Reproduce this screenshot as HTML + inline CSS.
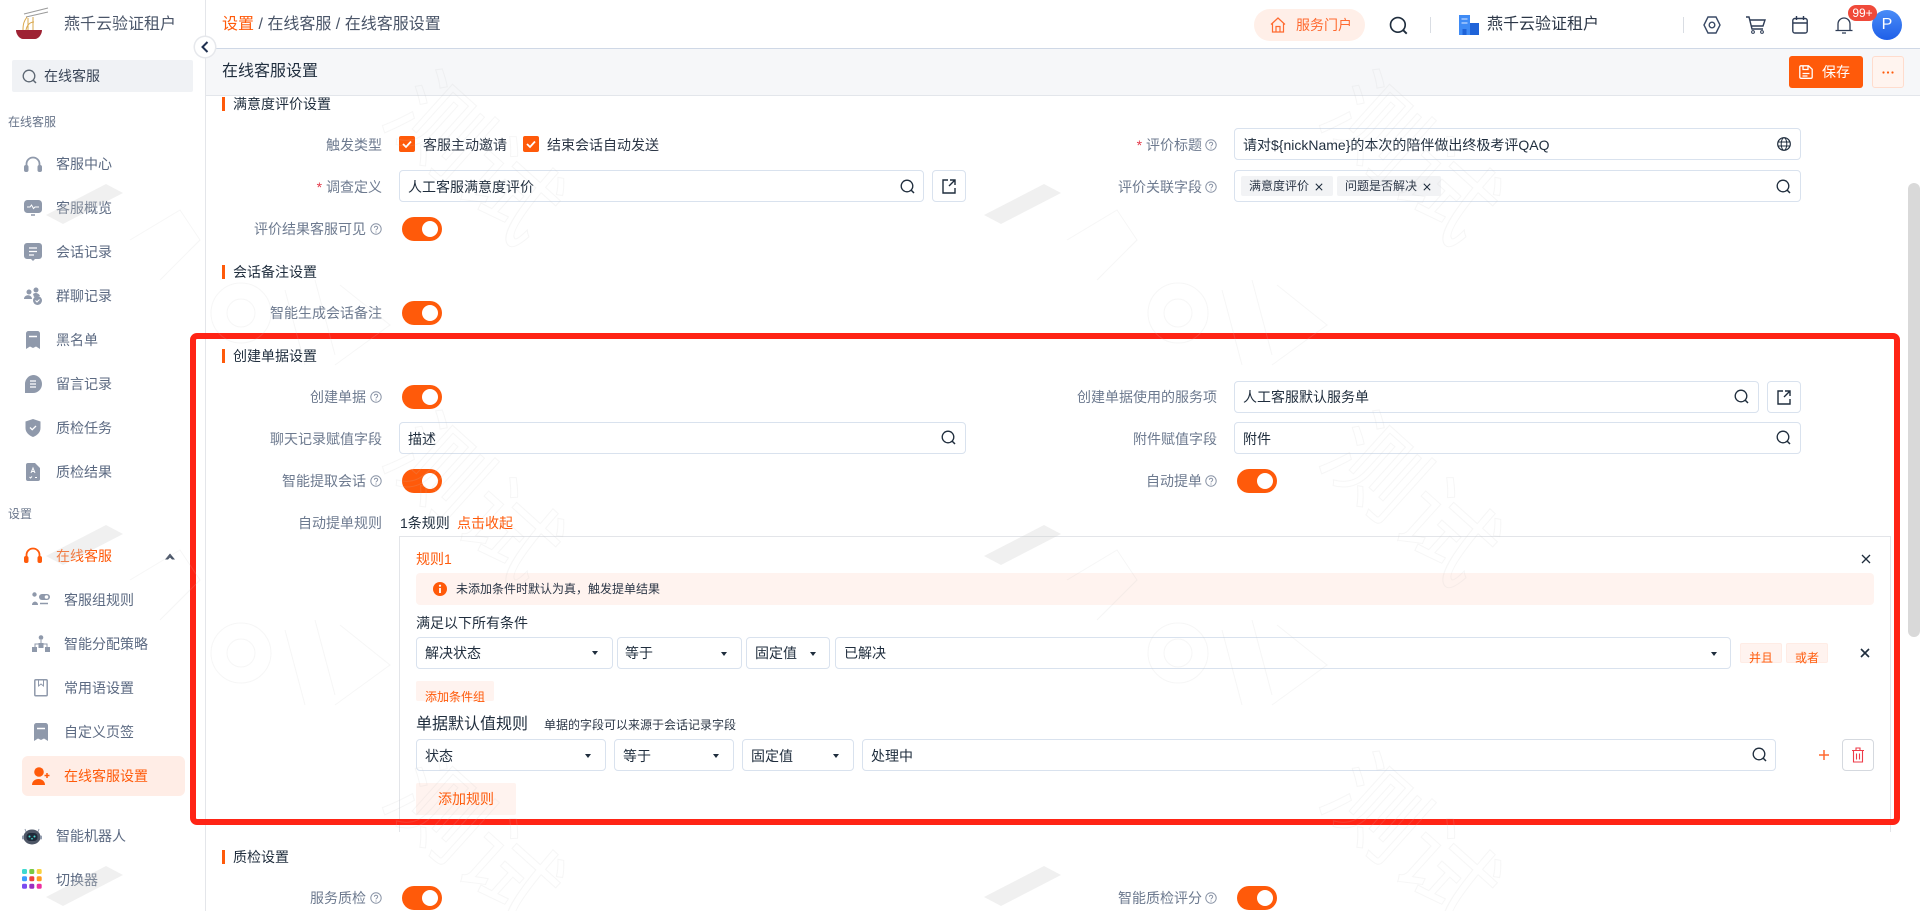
<!DOCTYPE html>
<html lang="zh"><head><meta charset="utf-8"><title>在线客服设置</title>
<style>
html,body{margin:0;padding:0;width:1920px;height:911px;overflow:hidden;background:#fff;font-family:"Liberation Sans","Noto Sans CJK SC",sans-serif;font-size:14px;color:#1f2d3d}
.t{position:absolute;white-space:nowrap;line-height:20px;height:20px}
.m{color:#5c6a82}.s{color:#69758a;font-size:12px}.sec{font-size:14px;color:#1f2d3d;left:233px}
.l{color:#6d7a8f}.o{color:#ff5a0a}
.b{position:absolute;border:1px solid #d9e2ee;border-radius:4px;background:#fff;box-sizing:border-box}
.bar{position:absolute;left:222px;width:3px;height:14px;background:#ff5a0a}
.tg{position:absolute;width:40px;height:24px;border-radius:12px;background:#ff5a0a}
.tg:after{content:"";position:absolute;left:20px;top:4px;width:16px;height:16px;border-radius:50%;background:#fff}
.tag{position:absolute;top:176px;height:20px;background:#f2f3f5;border-radius:2px}
.lt{position:absolute;background:#fff3ef;border-radius:2px}
.car{position:absolute;width:0;height:0;border-left:3.5px solid transparent;border-right:3.5px solid transparent;border-top:4px solid #1f2d3d}
.ck{position:absolute;top:136px;width:16px;height:16px;background:#ff5a0a;border-radius:2px}
svg{position:absolute;overflow:visible}
</style></head><body>
<svg width="0" height="0" style="position:absolute"><defs>
<g id="sr"><circle cx="7" cy="7" r="5.8" fill="none" stroke="#1f2d3d" stroke-width="1.3"/><path d="M11 11l3 3" stroke="#1f2d3d" stroke-width="1.5" fill="none"/></g>
<g id="hp"><circle cx="6" cy="6" r="5.2" fill="none" stroke="#8a94a6" stroke-width="1"/><path d="M4.4 4.8c0-2.1 3.3-2.1 3.3 0 0 1.3-1.7 1.3-1.7 2.6" fill="none" stroke="#8a94a6"/><circle cx="6" cy="9" r=".6" fill="#8a94a6"/></g>
<g id="op"><path d="M7 2H2v13h12v-5M9 2h5v5M14 2L8 8" fill="none" stroke="#1f2d3d" stroke-width="1.4"/></g>
<g id="x"><path d="M1 1l8 8M9 1L1 9" fill="none" stroke="#1f2d3d" stroke-width="1.3"/></g>
<path id="ckm" d="M4 8l3 3 5-5.5" fill="none" stroke="#fff" stroke-width="1.8"/>
</defs></svg>

<!-- sidebar -->
<div style="position:absolute;left:205px;top:0;width:1px;height:911px;background:#e4e6ea"></div>
<svg style="left:14px;top:6px" width="36" height="36" viewBox="0 0 36 36"><path d="M2 24h26c0 5-4 9-7 9H9c-3 0-7-4-7-9z" fill="#9e2233"/><path d="M10 8L34 2M12 11L34 6" stroke="#9a9a9a" stroke-width="1" fill="none"/><path d="M9 24c0-6 1-9 4-13M14 24V12M19 24V11M12 24c1-5 4-8 8-8" stroke="#d9a84e" stroke-width="1" fill="none"/></svg>
<div class="t" style="left:64px;top:15px;font-size:16px;color:#4a5568">燕千云验证租户</div>
<div style="position:absolute;left:12px;top:60px;width:181px;height:32px;background:#f0f2f5;border-radius:2px"></div>
<svg style="left:22px;top:69px" width="15" height="15"><use href="#sr" style="opacity:.7"/></svg>
<div class="t" style="left:44px;top:66px;color:#3a4557">在线客服</div>
<div class="t s" style="left:8px;top:112px">在线客服</div>
<div class="t m" style="left:56px;top:154px">客服中心</div>
<div class="t m" style="left:56px;top:198px">客服概览</div>
<div class="t m" style="left:56px;top:242px">会话记录</div>
<div class="t m" style="left:56px;top:286px">群聊记录</div>
<div class="t m" style="left:56px;top:330px">黑名单</div>
<div class="t m" style="left:56px;top:374px">留言记录</div>
<div class="t m" style="left:56px;top:418px">质检任务</div>
<div class="t m" style="left:56px;top:462px">质检结果</div>
<div class="t s" style="left:8px;top:504px">设置</div>
<div class="t o" style="left:56px;top:546px">在线客服</div>
<div class="t m" style="left:64px;top:590px">客服组规则</div>
<div class="t m" style="left:64px;top:634px">智能分配策略</div>
<div class="t m" style="left:64px;top:678px">常用语设置</div>
<div class="t m" style="left:64px;top:722px">自定义页签</div>
<div style="position:absolute;left:22px;top:756px;width:163px;height:40px;background:#ffede6;border-radius:6px"></div>
<div class="t o" style="left:64px;top:766px">在线客服设置</div>
<div class="t m" style="left:56px;top:826px">智能机器人</div>
<div class="t m" style="left:56px;top:870px">切换器</div>

<!-- sidebar icons -->
<svg style="left:24px;top:156px" width="18" height="18" viewBox="0 0 18 18"><path d="M2.5 11V8a6.5 6.5 0 0113 0v3" fill="none" stroke="#8f99ab" stroke-width="1.8"/><rect x="0" y="9" width="4.5" height="7" rx="2" fill="#8f99ab"/><rect x="13.5" y="9" width="4.5" height="7" rx="2" fill="#8f99ab"/></svg>
<svg style="left:24px;top:199px" width="18" height="18" viewBox="0 0 18 18"><rect x="0" y="1" width="18" height="13" rx="3.5" fill="#8f99ab"/><path d="M7 16h4" stroke="#8f99ab" stroke-width="1.5"/><path d="M3 8h3l1.5-2 2 3.5L11 8h4" fill="none" stroke="#fff" stroke-width="1"/></svg>
<svg style="left:24px;top:243px" width="18" height="18" viewBox="0 0 18 18"><path d="M3 0h12a3 3 0 013 3v10a3 3 0 01-3 3h-4l-2 2-2-2H3a3 3 0 01-3-3V3a3 3 0 013-3z" fill="#8f99ab"/><path d="M5 5h8M5 8.5h8M5 12h5" stroke="#fff" stroke-width="1.3"/></svg>
<svg style="left:24px;top:287px" width="18" height="18" viewBox="0 0 18 18"><circle cx="5" cy="5" r="2.5" fill="#8f99ab"/><circle cx="12" cy="3" r="2.5" fill="#8f99ab"/><path d="M0 12c0-5 8-5 8 0zM9 7c2-2 6-1 7 2l-6 1z" fill="#8f99ab"/><circle cx="13.5" cy="13.5" r="4.5" fill="#8f99ab"/><path d="M11.5 13.5l1.500 1.500 2.500-2.500" fill="none" stroke="#fff" stroke-width="1"/></svg>
<svg style="left:26px;top:331px" width="14" height="18" viewBox="0 0 14 18"><path d="M2.5 0h9A2.5 2.5 0 0114 2.5V18l-4-2.5L7 17l-3-1.5L0 18V2.5A2.5 2.5 0 012.5 0z" fill="#8f99ab"/><path d="M3 5.5h8" stroke="#fff" stroke-width="1.5"/></svg>
<svg style="left:24px;top:375px" width="18" height="18" viewBox="0 0 18 18"><path d="M9 0a9 9 0 110 18H1V9a9 9 0 018-9z" fill="#8f99ab"/><path d="M6 6h6M6 9h6M6 12h6" stroke="#fff" stroke-width="1.2"/></svg>
<svg style="left:25px;top:419px" width="16" height="18" viewBox="0 0 16 18"><path d="M8 0l7.5 2.5V9c0 4.5-3.5 7.5-7.500 9-4-1.500-7.500-4.500-7.500-9V2.500z" fill="#8f99ab"/><path d="M5 8.5l2.200 2.200L11 7" fill="none" stroke="#fff" stroke-width="1.3"/></svg>
<svg style="left:26px;top:463px" width="14" height="18" viewBox="0 0 14 18"><path d="M2 0h7l5 5v11a2 2 0 01-2 2H2a2 2 0 01-2-2V2a2 2 0 012-2z" fill="#8f99ab"/><path d="M5 10l2-5 2 5M5.5 8.5h3M3.5 14l1 1 1.500-1.500M9 14.500h2" fill="none" stroke="#fff" stroke-width="1"/></svg>
<svg style="left:24px;top:547px" width="18" height="18" viewBox="0 0 18 18"><path d="M2.5 11V8a6.5 6.5 0 0113 0v3" fill="none" stroke="#ff5a0a" stroke-width="1.8"/><rect x="0" y="9" width="4.5" height="7" rx="2" fill="#ff5a0a"/><rect x="13.5" y="9" width="4.5" height="7" rx="2" fill="#ff5a0a"/></svg>
<svg style="left:165px;top:553px" width="10" height="7" viewBox="0 0 10 7"><path d="M5 .5L10 6.500H7L5 4.500 3 6.500H0z" fill="#4a5568"/></svg>
<svg style="left:32px;top:592px" width="18" height="14" viewBox="0 0 18 14"><circle cx="2.5" cy="2.5" r="2.2" fill="#8f99ab"/><path d="M0 13c0-4.500 6-4.500 6 0z" fill="#8f99ab"/><rect x="7" y="2" width="11" height="6" rx="3" fill="#8f99ab"/><circle cx="14.5" cy="5" r="1.800" fill="#fff"/><path d="M8 11.500h8" stroke="#8f99ab" stroke-width="1.500"/></svg>
<svg style="left:32px;top:635px" width="18" height="18" viewBox="0 0 18 18"><circle cx="9" cy="2.5" r="2.300" fill="#8f99ab"/><path d="M9 5v4M3 12V9h12v3" fill="none" stroke="#8f99ab"/><rect x="0" y="12" width="5" height="5" fill="#8f99ab"/><rect x="6.5" y="8" width="5" height="5" fill="#8f99ab"/><rect x="13" y="12" width="5" height="5" fill="#8f99ab"/></svg>
<svg style="left:34px;top:679px" width="14" height="18" viewBox="0 0 14 18"><rect x=".8" y=".8" width="12.4" height="16" rx="1" fill="none" stroke="#8f99ab" stroke-width="1.5"/><path d="M4.5 1v6l2.500-2 2.500 2V1" fill="none" stroke="#8f99ab"/></svg>
<svg style="left:34px;top:723px" width="14" height="18" viewBox="0 0 14 18"><path d="M2.5 0h9A2.5 2.5 0 0114 2.5V18l-4-2.5L7 17l-3-1.5L0 18V2.5A2.5 2.5 0 012.5 0z" fill="#8f99ab"/><path d="M3 5.5h8" stroke="#fff" stroke-width="1.5"/></svg>
<svg style="left:32px;top:767px" width="18" height="18" viewBox="0 0 18 18"><circle cx="7" cy="5" r="4.800" fill="#ff5a0a"/><path d="M0 18c0-8 13-8 13 0z" fill="#ff5a0a"/><path d="M15 6v5M12.5 8.5h5" stroke="#ff5a0a" stroke-width="1.5"/></svg>
<svg style="left:22px;top:826px" width="20" height="20" viewBox="0 0 20 20"><path d="M3 3l1.5 4M17 3l-1.500 4" stroke="#8f99ab"/><ellipse cx="10" cy="11" rx="8.5" ry="7.5" fill="#4d5666"/><rect x="4.5" y="7" width="11" height="8" rx="3.5" fill="#1f2a3a"/><circle cx="7.5" cy="10.5" r="1" fill="#4ce0d2"/><circle cx="12.5" cy="10.5" r="1" fill="#4ce0d2"/><path d="M9 12.8h2" stroke="#4ce0d2"/><rect x="0" y="9.5" width="2" height="4" rx="1" fill="#8f99ab"/><rect x="18" y="9.5" width="2" height="4" rx="1" fill="#8f99ab"/></svg>
<svg style="left:22px;top:869px" width="20" height="20" viewBox="0 0 20 20"><g><rect x="0" y="0" width="5" height="5" rx="1.5" fill="#3ed9d0"/><rect x="7.3" y="0" width="5" height="5" rx="1.5" fill="#7ac943"/><rect x="14.7" y="0" width="5" height="5" rx="1.5" fill="#f9d13e"/><rect x="0" y="7.3" width="5" height="5" rx="1.5" fill="#3b9cff"/><rect x="7.3" y="7.3" width="5" height="5" rx="1.5" fill="#f0413e"/><rect x="14.7" y="7.3" width="5" height="5" rx="1.5" fill="#ff9a1f"/><rect x="0" y="14.7" width="5" height="5" rx="1.5" fill="#7a4cf0"/><rect x="7.3" y="14.7" width="5" height="5" rx="1.5" fill="#9b2fc0"/><rect x="14.7" y="14.7" width="5" height="5" rx="1.5" fill="#ee2fa0"/></g></svg>

<!-- header -->
<div class="t" style="left:222px;top:15px;font-size:16px;color:#4a5568"><span class="o">设置</span> / 在线客服 / 在线客服设置</div>
<div style="position:absolute;left:206px;top:48px;right:0;height:1px;background:#cfd8e6"></div>
<div style="position:absolute;left:206px;top:49px;right:0;height:46px;background:#f6f7f9;border-bottom:1px solid #e3e6eb"></div>
<div style="position:absolute;left:195px;top:37px;width:20px;height:20px;border-radius:50%;background:#fff;box-shadow:0 0 0 1.5px #e6e8ec"></div>
<svg style="left:201px;top:41px" width="8" height="12" viewBox="0 0 8 12"><path d="M6.5 1L1.500 6l5 5" fill="none" stroke="#1f3050" stroke-width="2"/></svg>
<div class="t" style="left:222px;top:62px;font-size:16px;color:#1f2d3d">在线客服设置</div>

<div style="position:absolute;left:1254px;top:9px;width:111px;height:32px;border-radius:16px;background:#ffefe8"></div>
<svg style="left:1270px;top:17px" width="16" height="16" viewBox="0 0 16 16"><path d="M1 7.5L8 1l7 6.500M2.500 6.500V15h11V6.500M6 15V9.500h4V15" fill="none" stroke="#ff6a30" stroke-width="1.2"/></svg>
<div class="t" style="left:1296px;top:15px;color:#ff6a30">服务门户</div>
<svg style="left:1389px;top:16px" width="19" height="19" viewBox="0 0 15 15"><use href="#sr"/></svg>
<div style="position:absolute;left:1430px;top:17px;width:1px;height:16px;background:#d9dde3"></div>
<svg style="left:1459px;top:15px" width="20" height="20" viewBox="0 0 20 20"><rect x="0" y="0" width="11" height="20" fill="#3f8bf5"/><rect x="11" y="8" width="9" height="12" fill="#1f63d8"/><path d="M2.5 4h6M2.5 8h6" stroke="#bcd6ff" stroke-width="1.2"/><rect x="3.5" y="14" width="4" height="6" fill="#1f63d8"/></svg>
<div class="t" style="left:1487px;top:15px;font-size:16px;color:#2b3646">燕千云验证租户</div>
<div style="position:absolute;left:1683px;top:17px;width:1px;height:16px;background:#d9dde3"></div>
<svg style="left:1703px;top:15px" width="18" height="20" viewBox="0 0 18 20"><path d="M1 10l4-8h8l4 8-4 8H5z" fill="none" stroke="#3a4a66" stroke-width="1.4"/><circle cx="9" cy="10" r="2.8" fill="none" stroke="#3a4a66" stroke-width="1.4"/></svg>
<svg style="left:1746px;top:16px" width="20" height="18" viewBox="0 0 20 18"><path d="M0 1h3l3 12h11M4 4h15l-2 6H5.500" fill="none" stroke="#2f3d56" stroke-width="1.4"/><circle cx="7" cy="16" r="1.4" fill="none" stroke="#2f3d56"/><circle cx="16" cy="16" r="1.4" fill="none" stroke="#2f3d56"/></svg>
<svg style="left:1792px;top:16px" width="16" height="18" viewBox="0 0 16 18"><rect x=".8" y="2.5" width="14.4" height="14.5" rx="2" fill="none" stroke="#2f3d56" stroke-width="1.4"/><path d="M.8 7h14.400M4.500 0v4M11.500 0v4" stroke="#2f3d56" stroke-width="1.4"/></svg>
<svg style="left:1835px;top:16px" width="18" height="18" viewBox="0 0 18 18"><path d="M3 14V8a6 6 0 0112 0v6M0.500 14.500h17M7 17h4" fill="none" stroke="#2f3d56" stroke-width="1.3"/></svg>
<div style="position:absolute;left:1872px;top:10px;width:30px;height:30px;border-radius:50%;background:linear-gradient(#4a8cf7,#1f5fe8);color:#fff;text-align:center;line-height:30px;font-size:16px">P</div>
<div style="position:absolute;left:1848px;top:5px;width:29px;height:16px;border-radius:8px;background:#f04a3a;color:#fff;font-size:12px;line-height:16px;text-align:center">99+</div>

<div style="position:absolute;left:1789px;top:56px;width:74px;height:32px;background:#ff5a0a;border-radius:3px"></div>
<svg style="left:1799px;top:65px" width="14" height="14" viewBox="0 0 14 14"><path d="M2 .8h7.500l3.700 3.500V12a1.300 1.300 0 01-1.300 1.300H2A1.300 1.300 0 01.8 12V2A1.300 1.300 0 012 .8zM4 1v3.500h5V1M3.500 8.500h7M3.500 11h5" fill="none" stroke="#fff" stroke-width="1.3"/></svg>
<div class="t" style="left:1822px;top:62px;color:#fff">保存</div>
<div style="position:absolute;left:1872px;top:56px;width:32px;height:32px;box-sizing:border-box;background:#fff4ef;border:1px solid #ffdccd;border-radius:3px"></div>
<svg style="left:1882px;top:71px" width="12" height="3"><circle cx="1.5" cy="1.5" r="1.1" fill="#ff5a0a"/><circle cx="6" cy="1.5" r="1.1" fill="#ff5a0a"/><circle cx="10.5" cy="1.5" r="1.1" fill="#ff5a0a"/></svg>

<div style="position:absolute;left:1908px;top:183px;width:12px;height:454px;background:#d9d9d9;border-radius:6px"></div>

<!-- section bars and titles -->
<div class="bar" style="top:97px"></div><div class="t sec" style="top:94px">满意度评价设置</div>
<div class="bar" style="top:265px"></div><div class="t sec" style="top:262px">会话备注设置</div>
<div class="bar" style="top:349px"></div><div class="t sec" style="top:346px">创建单据设置</div>
<div class="bar" style="top:850px"></div><div class="t sec" style="top:847px">质检设置</div>

<!-- left labels -->
<div class="t l" style="right:1538px;top:135px">触发类型</div>
<div class="t l" style="right:1538px;top:177px"><span style="color:#e3394a">*</span> 调查定义</div>
<div class="t l" style="right:1554px;top:219px">评价结果客服可见</div>
<div class="t l" style="right:1538px;top:303px">智能生成会话备注</div>
<div class="t l" style="right:1554px;top:387px">创建单据</div>
<div class="t l" style="right:1538px;top:429px">聊天记录赋值字段</div>
<div class="t l" style="right:1554px;top:471px">智能提取会话</div>
<div class="t l" style="right:1538px;top:513px">自动提单规则</div>
<div class="t l" style="right:1554px;top:888px">服务质检</div>
<svg style="left:370px;top:223px" width="12" height="12"><use href="#hp"/></svg>
<svg style="left:370px;top:391px" width="12" height="12"><use href="#hp"/></svg>
<svg style="left:370px;top:475px" width="12" height="12"><use href="#hp"/></svg>
<svg style="left:370px;top:892px" width="12" height="12"><use href="#hp"/></svg>

<!-- right labels -->
<div class="t l" style="right:718px;top:135px"><span style="color:#e3394a">*</span> 评价标题</div>
<div class="t l" style="right:718px;top:177px">评价关联字段</div>
<div class="t l" style="right:703px;top:387px">创建单据使用的服务项</div>
<div class="t l" style="right:703px;top:429px">附件赋值字段</div>
<div class="t l" style="right:718px;top:471px">自动提单</div>
<div class="t l" style="right:718px;top:888px">智能质检评分</div>
<svg style="left:1205px;top:139px" width="12" height="12"><use href="#hp"/></svg>
<svg style="left:1205px;top:181px" width="12" height="12"><use href="#hp"/></svg>
<svg style="left:1205px;top:475px" width="12" height="12"><use href="#hp"/></svg>
<svg style="left:1205px;top:892px" width="12" height="12"><use href="#hp"/></svg>

<!-- checkboxes -->
<div class="ck" style="left:399px"></div><svg style="left:399px;top:136px" width="16" height="16"><use href="#ckm"/></svg>
<div class="t" style="left:423px;top:135px;color:#2b3646">客服主动邀请</div>
<div class="ck" style="left:523px"></div><svg style="left:523px;top:136px" width="16" height="16"><use href="#ckm"/></svg>
<div class="t" style="left:547px;top:135px;color:#2b3646">结束会话自动发送</div>

<!-- toggles -->
<div class="tg" style="left:402px;top:217px"></div>
<div class="tg" style="left:402px;top:301px"></div>
<div class="tg" style="left:402px;top:385px"></div>
<div class="tg" style="left:402px;top:469px"></div>
<div class="tg" style="left:1237px;top:469px"></div>
<div class="tg" style="left:402px;top:886px"></div>
<div class="tg" style="left:1237px;top:886px"></div>

<!-- inputs -->
<div class="b" style="left:399px;top:170px;width:525px;height:32px"></div>
<div class="t" style="left:408px;top:177px">人工客服满意度评价</div>
<svg style="left:900px;top:179px" width="15" height="15"><use href="#sr"/></svg>
<div class="b" style="left:932px;top:170px;width:34px;height:32px"></div>
<svg style="left:941px;top:178px" width="16" height="16"><use href="#op"/></svg>

<div class="b" style="left:1234px;top:128px;width:567px;height:32px"></div>
<div class="t" style="left:1243px;top:135px">请对${nickName}的本次的陪伴做出终极考评QAQ</div>
<svg style="left:1777px;top:137px" width="14" height="14" viewBox="0 0 14 14"><circle cx="7" cy="7" r="6.3" fill="none" stroke="#1f2d3d" stroke-width="1.2"/><ellipse cx="7" cy="7" rx="2.8" ry="6.3" fill="none" stroke="#1f2d3d"/><path d="M1 5h12M1 9h12" stroke="#1f2d3d"/></svg>

<div class="b" style="left:1234px;top:170px;width:567px;height:32px"></div>
<div class="tag" style="left:1241px;width:92px"></div>
<div class="t" style="left:1249px;top:176px;font-size:12px;color:#2b3646">满意度评价</div>
<svg style="left:1315px;top:183px" width="8" height="8" viewBox="0 0 10 10"><use href="#x"/></svg>
<div class="tag" style="left:1337px;width:104px"></div>
<div class="t" style="left:1345px;top:176px;font-size:12px;color:#2b3646">问题是否解决</div>
<svg style="left:1423px;top:183px" width="8" height="8" viewBox="0 0 10 10"><use href="#x"/></svg>
<svg style="left:1776px;top:179px" width="15" height="15"><use href="#sr"/></svg>

<div class="b" style="left:1234px;top:381px;width:525px;height:32px"></div>
<div class="t" style="left:1243px;top:387px">人工客服默认服务单</div>
<svg style="left:1734px;top:389px" width="15" height="15"><use href="#sr"/></svg>
<div class="b" style="left:1767px;top:381px;width:34px;height:32px"></div>
<svg style="left:1776px;top:389px" width="16" height="16"><use href="#op"/></svg>

<div class="b" style="left:399px;top:422px;width:567px;height:32px"></div>
<div class="t" style="left:408px;top:429px">描述</div>
<svg style="left:941px;top:430px" width="15" height="15"><use href="#sr"/></svg>

<div class="b" style="left:1234px;top:422px;width:567px;height:32px"></div>
<div class="t" style="left:1243px;top:429px">附件</div>
<svg style="left:1776px;top:430px" width="15" height="15"><use href="#sr"/></svg>

<div class="t" style="left:400px;top:513px">1条规则</div>
<div class="t o" style="left:457px;top:513px">点击收起</div>

<!-- rule card -->
<div style="position:absolute;left:399px;top:536px;width:1492px;height:296px;box-sizing:border-box;border:1px solid #e3e5e9;border-bottom:0"></div>
<div class="t o" style="left:416px;top:549px">规则1</div>
<svg style="left:1861px;top:554px" width="10" height="10"><use href="#x"/></svg>
<div style="position:absolute;left:416px;top:573px;width:1458px;height:32px;background:#fff3ef;border-radius:4px"></div>
<svg style="left:433px;top:582px" width="14" height="14" viewBox="0 0 14 14"><circle cx="7" cy="7" r="7" fill="#ff5a0a"/><path d="M7 6v5" stroke="#fff" stroke-width="1.8"/><circle cx="7" cy="3.7" r="1.1" fill="#fff"/></svg>
<div class="t" style="left:456px;top:579px;font-size:12px;color:#2b3646">未添加条件时默认为真，触发提单结果</div>
<div class="t" style="left:416px;top:613px">满足以下所有条件</div>

<div class="b" style="left:416px;top:637px;width:197px;height:32px"></div><div class="t" style="left:425px;top:643px">解决状态</div><div class="car" style="left:592px;top:651px"></div>
<div class="b" style="left:617px;top:637px;width:125px;height:32px"></div><div class="t" style="left:625px;top:643px">等于</div><div class="car" style="left:721px;top:652px"></div>
<div class="b" style="left:746px;top:637px;width:84px;height:32px"></div><div class="t" style="left:755px;top:643px">固定值</div><div class="car" style="left:810px;top:652px"></div>
<div class="b" style="left:835px;top:637px;width:896px;height:32px"></div><div class="t" style="left:844px;top:643px">已解决</div><div class="car" style="left:1711px;top:652px"></div>

<div class="lt" style="left:1740px;top:643px;width:42px;height:20px;box-sizing:border-box;border:1px solid #ffece5"></div><div class="t o" style="left:1749px;top:648px;font-size:12px">并且</div>
<div class="lt" style="left:1786px;top:643px;width:42px;height:20px;box-sizing:border-box;border:1px solid #ffece5"></div><div class="t o" style="left:1795px;top:648px;font-size:12px">或者</div>
<svg style="left:1860px;top:648px" width="10" height="10"><path d="M1 1l8 8M9 1L1 9" fill="none" stroke="#1f2d3d" stroke-width="1.6"/></svg>

<div class="lt" style="left:416px;top:681px;width:78px;height:20px"></div><div class="t o" style="left:425px;top:687px;font-size:12px">添加条件组</div>
<div class="t" style="left:416px;top:715px;font-size:16px">单据默认值规则</div>
<div class="t" style="left:544px;top:715px;font-size:12px;color:#2b3646">单据的字段可以来源于会话记录字段</div>

<div class="b" style="left:416px;top:739px;width:190px;height:32px"></div><div class="t" style="left:425px;top:746px">状态</div><div class="car" style="left:585px;top:754px"></div>
<div class="b" style="left:614px;top:739px;width:120px;height:32px"></div><div class="t" style="left:623px;top:746px">等于</div><div class="car" style="left:713px;top:754px"></div>
<div class="b" style="left:742px;top:739px;width:112px;height:32px"></div><div class="t" style="left:751px;top:746px">固定值</div><div class="car" style="left:833px;top:754px"></div>
<div class="b" style="left:862px;top:739px;width:914px;height:32px"></div><div class="t" style="left:871px;top:746px">处理中</div>
<svg style="left:1752px;top:747px" width="15" height="15"><use href="#sr"/></svg>
<svg style="left:1818px;top:749px" width="12" height="12"><path d="M6 1v10M1 6h10" stroke="#ff6a30" stroke-width="1.5"/></svg>
<div class="b" style="left:1842px;top:739px;width:32px;height:32px;border-color:#d5d9df"></div>
<svg style="left:1852px;top:747px" width="12" height="16" viewBox="0 0 12 16"><path d="M0 3.5h12M4 3.500V1h4v2.500M1.500 3.500v11.500h9V3.500M4.500 6.500v6M7.500 6.500v6" fill="none" stroke="#ee3b48" stroke-width="1.1"/></svg>
<div class="lt" style="left:416px;top:783px;width:100px;height:32px"></div><div class="t o" style="left:438px;top:789px">添加规则</div>

<!-- red frame -->
<div style="position:absolute;left:190px;top:333px;width:1710px;height:492px;box-sizing:border-box;border:6px solid #ff2415;border-radius:7px"></div>

<!-- watermark -->
<svg style="left:0;top:0;pointer-events:none" width="1920" height="911" viewBox="0 0 1920 911">
<g fill="rgba(205,205,205,.3)">
<polygon points="46,215 106,184 123,193 63,224"/><polygon points="46,556 106,525 123,534 63,565"/><polygon points="46,897 106,866 123,875 63,906"/>
<polygon points="984,215 1044,184 1061,193 1001,224"/><polygon points="984,556 1044,525 1061,534 1001,565"/><polygon points="984,897 1044,866 1061,875 1001,906"/>
</g>
<g fill="none" stroke="rgba(200,200,200,.16)" stroke-width="1">
<circle cx="241" cy="313" r="30"/><circle cx="241" cy="313" r="14"/><circle cx="241" cy="653" r="30"/><circle cx="241" cy="653" r="14"/>
<circle cx="1178" cy="313" r="30"/><circle cx="1178" cy="313" r="14"/><circle cx="1178" cy="653" r="30"/><circle cx="1178" cy="653" r="14"/>
<path d="M285 290l20 75M315 280l20 75M340 285l50 40-55 40"/><path d="M285 630l20 75M315 620l20 75M340 625l50 40-55 40"/>
<path d="M1222 290l20 75M1252 280l20 75M1277 285l50 40-55 40"/><path d="M1222 630l20 75M1252 620l20 75M1277 625l50 40-55 40"/>
<path d="M130 240l50-30 20 30-40 40M130 580l50-30 20 30-40 40M1067 240l50-30 20 30-40 40M1067 580l50-30 20 30-40 40"/>
<g font-family="Noto Sans CJK SC" font-size="96">
<text transform="translate(380,120) rotate(42)">测试</text>
<text transform="translate(380,461) rotate(42)">测试</text>
<text transform="translate(380,802) rotate(42)">测试</text>
<text transform="translate(1317,120) rotate(42)">测试</text>
<text transform="translate(1317,461) rotate(42)">测试</text>
<text transform="translate(1317,802) rotate(42)">测试</text>
</g></g></svg>
</body></html>
